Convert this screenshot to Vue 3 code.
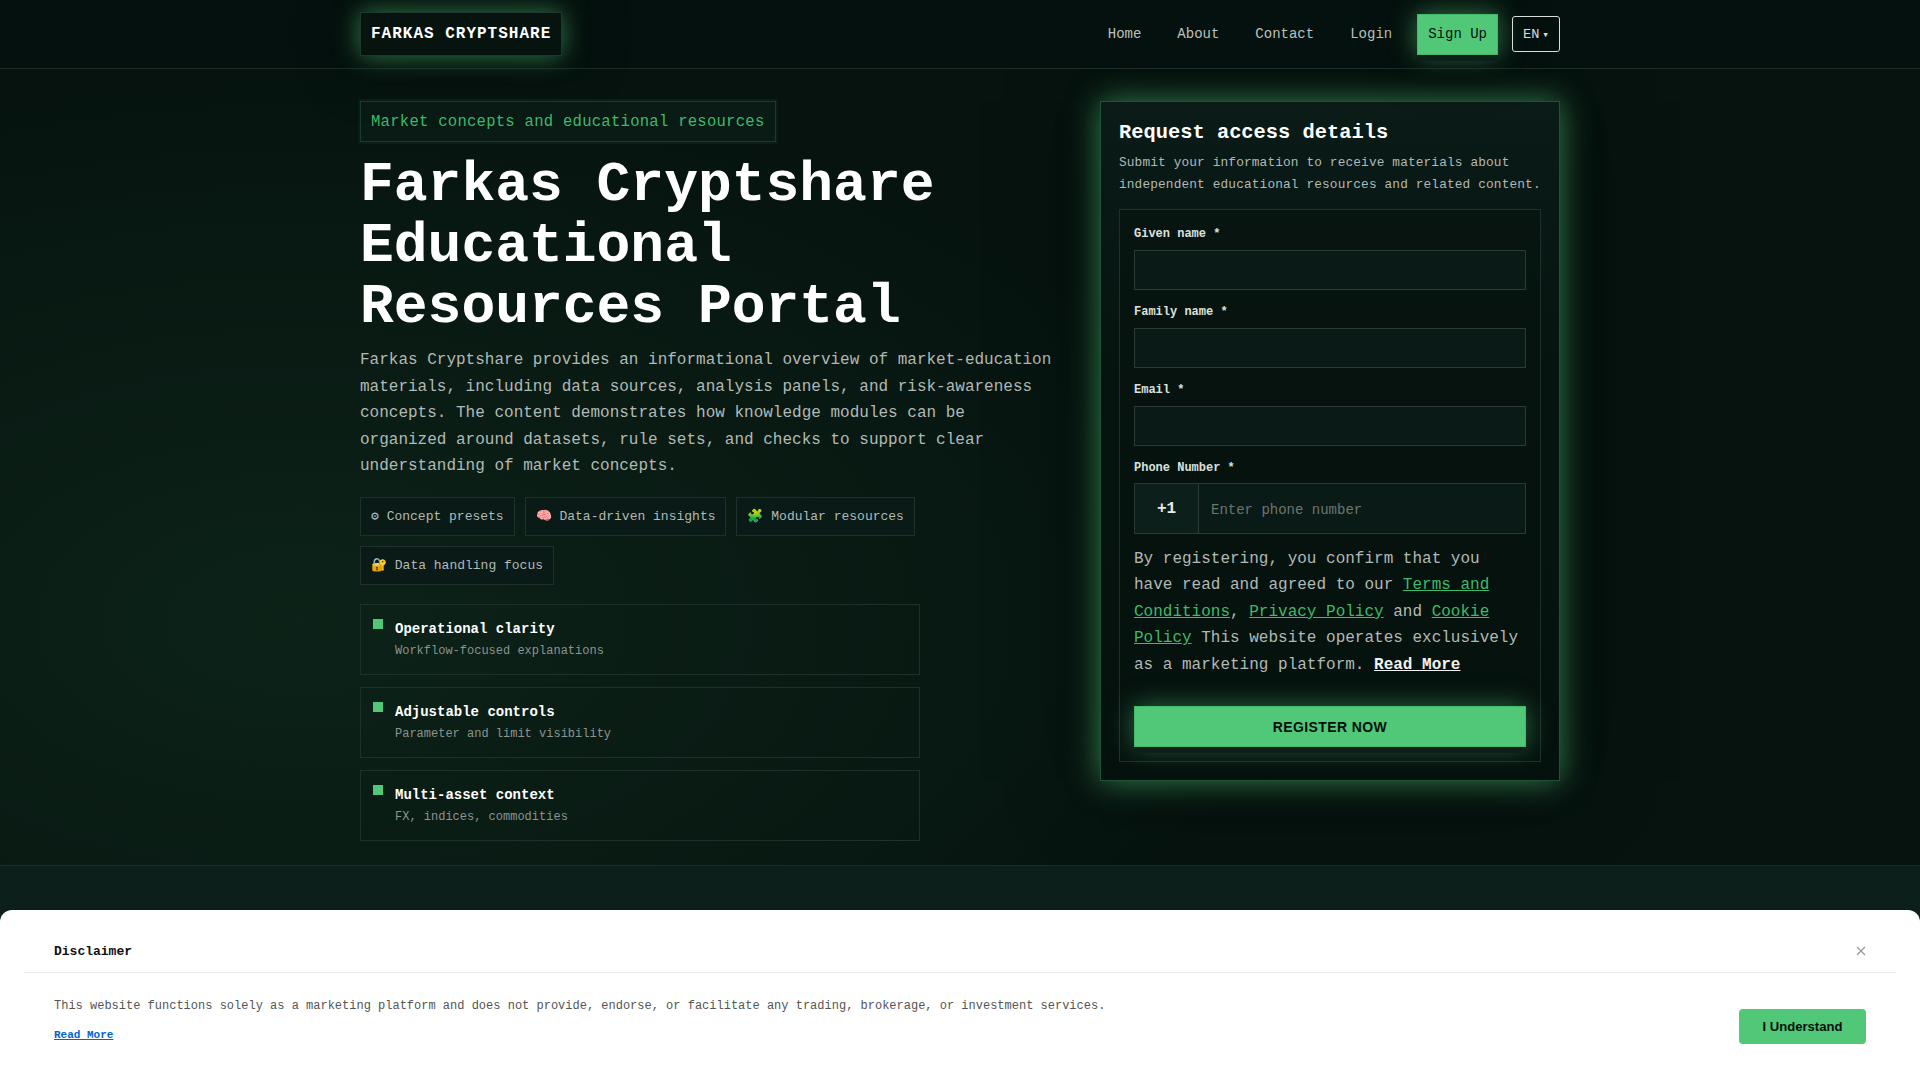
<script setup>
const navLinks = ['Home', 'About', 'Contact', 'Login']
const chips = [
  { icon: '⚙', label: 'Concept presets' },
  { icon: '🧠', label: 'Data-driven insights' },
  { icon: '🧩', label: 'Modular resources' },
  { icon: '🔐', label: 'Data handling focus' }
]
const features = [
  { title: 'Operational clarity', text: 'Workflow-focused explanations' },
  { title: 'Adjustable controls', text: 'Parameter and limit visibility' },
  { title: 'Multi-asset context', text: 'FX, indices, commodities' }
]
const fields = ['Given name *', 'Family name *', 'Email *']
</script>

<template>
  <div class="page">
    <header class="topbar">
      <div class="wrap topbar-row">
        <a class="logo">FARKAS CRYPTSHARE</a>
        <nav class="nav">
          <a v-for="l in navLinks" :key="l" class="nav-link">{{ l }}</a>
          <a class="signup">Sign Up</a>
          <button class="lang">EN<span class="caret">▾</span></button>
        </nav>
      </div>
    </header>

    <section class="hero">
      <div class="wrap hero-grid">
        <div class="left">
          <div class="tag">Market concepts and educational resources</div>
          <h1 class="title">Farkas Cryptshare Educational Resources Portal</h1>
          <p class="lead">Farkas Cryptshare provides an informational overview of market-education materials, including data sources, analysis panels, and risk-awareness concepts. The content demonstrates how knowledge modules can be organized around datasets, rule sets, and checks to support clear understanding of market concepts.</p>
          <div class="chips">
            <span v-for="c in chips" :key="c.label" class="chip">{{ c.icon }} {{ c.label }}</span>
          </div>
          <div class="cards">
            <div v-for="f in features" :key="f.title" class="card">
              <span class="bullet"></span>
              <div>
                <div class="card-title">{{ f.title }}</div>
                <div class="card-text">{{ f.text }}</div>
              </div>
            </div>
          </div>
        </div>

        <aside class="panel">
          <h2 class="panel-title">Request access details</h2>
          <p class="panel-sub">Submit your information to receive materials about independent educational resources and related content.</p>
          <form class="form" @submit.prevent>
            <div v-for="f in fields" :key="f" class="field">
              <label class="label">{{ f }}</label>
              <input class="input" type="text" />
            </div>
            <div class="field phone-field">
              <label class="label">Phone Number *</label>
              <div class="phone">
                <span class="prefix">+1</span>
                <input class="phone-input" type="tel" placeholder="Enter phone number" />
              </div>
            </div>
            <p class="consent">By registering, you confirm that you have read and agreed to our <a class="link">Terms and Conditions</a>, <a class="link">Privacy Policy</a> and <a class="link">Cookie Policy</a> This website operates exclusively as a marketing platform. <a class="more">Read More</a></p>
            <button class="register" type="submit">REGISTER NOW</button>
          </form>
        </aside>
      </div>
    </section>

    <div class="lower"></div>

    <div class="disclaimer">
      <div class="disc-head">
        <strong class="disc-title">Disclaimer</strong>
        <svg class="close" width="10" height="10" viewBox="0 0 10 10" aria-label="Close">
          <path d="M1 1 L9 9 M9 1 L1 9" stroke="#999" stroke-width="1.2" fill="none" />
        </svg>
      </div>
      <div class="disc-body">
        <div>
          <p class="disc-text">This website functions solely as a marketing platform and does not provide, endorse, or facilitate any trading, brokerage, or investment services.</p>
          <a class="disc-more">Read More</a>
        </div>
        <button class="understand">I Understand</button>
      </div>
    </div>
  </div>
</template>

<style>
html, body { margin: 0; background: #06120f; }
</style>

<style scoped>
* { box-sizing: border-box; }
.page {
  height: 1080px;
  overflow: hidden;
  display: flex;
  flex-direction: column;
  font-family: "Liberation Mono", monospace;
  color: #fff;
  background:
    radial-gradient(ellipse 1000px 560px at 300px 620px, rgba(80, 200, 120, 0.085), transparent 100%),
    #06130f;
}
.wrap { width: 1200px; margin: 0 auto; }
.topbar { height: 69px; border-bottom: 1px solid #1d2c28; background: #05110e; flex: none; position: relative; }
.topbar-row { display: flex; justify-content: space-between; padding-top: 12px; align-items: flex-start; }
.logo {
  height: 44px;
  display: flex;
  align-items: center;
  padding: 0 10px;
  font-size: 16px;
  font-weight: 700;
  letter-spacing: 1px;
  background: #06130f;
  border: 1px solid #1c3a2b;
  box-shadow: 0 0 26px rgba(80, 200, 120, 0.6), 0 0 60px rgba(0, 0, 0, 0.5);
}
.nav { display: flex; gap: 14px; align-items: center; font-size: 14px; margin-top: 2px; }
.nav-link { padding: 0 11px 2px; color: #bcc2bf; }
.signup {
  height: 41px;
  display: flex;
  align-items: center;
  padding: 0 10px 1px;
  background: #50c878;
  border: 1px solid #45b86c;
  color: #04100c;
  box-shadow: 0 6px 0 #0d1f1a, 0 0 26px rgba(80, 200, 120, 0.6), 0 0 50px rgba(0, 0, 0, 0.5);
}
.lang {
  width: 48px;
  height: 36px;
  margin-top: -1px;
  background: transparent;
  border: 1px solid #d8dcda;
  border-radius: 3px;
  color: #d8dcda;
  font: 13.6px "Liberation Mono", monospace;
  padding: 0;
}
.caret { font-size: 11px; margin-left: 3px; }

.hero { flex: none; height: 797px; padding-top: 32px; border-bottom: 1px solid #1d2c28; }
.hero-grid { display: grid; grid-template-columns: 700px 460px; gap: 40px; align-items: start; }
.left { display: flex; flex-direction: column; }
.tag {
  align-self: flex-start;
  height: 41px;
  display: flex;
  align-items: center;
  padding: 0 10px;
  font-size: 15.6px;
  letter-spacing: 0.24px;
  color: #3fb96b;
  background: #0a1a15;
  border: 1px solid #1a3a2a;
  box-shadow: 0 0 0 2px #0b1d17;
}
.title { margin: 13px 0 0; font-size: 56.32px; line-height: 60.8px; font-weight: 700; }
.lead { margin: 10px 0 0; font-size: 16px; line-height: 26.4px; color: #b2b9b6; }
.chips { display: flex; flex-wrap: wrap; gap: 10px; margin-top: 18px; max-width: 560px; }
.chip {
  display: block;
  height: 39px;
  line-height: 37px;
  white-space: pre;
  padding: 0 10px;
  font-size: 13px;
  color: #b2b9b6;
  background: #0a1a16;
  border: 1px solid #1f302b;
}
.cards { display: flex; flex-direction: column; gap: 12px; margin-top: 19px; max-width: 560px; }
.card {
  height: 71px;
  display: flex;
  gap: 12px;
  padding: 14px 12px;
  border: 1px solid #1f302b;
}
.bullet { width: 10px; height: 10px; background: #50c878; flex: none; }
.card-title { font-size: 14px; font-weight: 700; line-height: 18px; margin-top: 1px; }
.card-text { font-size: 12px; line-height: 16px; margin-top: 5px; color: #8a9490; }

.panel {
  height: 680px;
  padding: 19px 18px 18px;
  background: linear-gradient(180deg, #0a1b18, #06140f 40%, #05110d);
  border: 1px solid #1f5236;
  box-shadow: 0 0 30px rgba(80, 200, 120, 0.62), 0 0 80px rgba(0, 0, 0, 0.55);
}
.panel-title { margin: 0; font-size: 20.4px; line-height: 24px; font-weight: 700; }
.panel-sub { margin: 7px 0 0; font-size: 12.8px; letter-spacing: 0.13px; line-height: 22px; color: #b2b9b6; }
.form {
  margin-top: 13px;
  height: 553px;
  padding: 14px;
  border: 1px solid #1f302b;
  background: rgba(5, 17, 13, 0.5);
  display: flex;
  flex-direction: column;
}
.field { margin-bottom: 12px; display: flex; flex-direction: column; }
.label { font-size: 12px; line-height: 20px; font-weight: 700; color: #dce0de; margin-bottom: 6px; }
.input { height: 40px; background: #0a1a16; border: 1px solid #2a3a36; outline: none; }
.phone-field { margin-bottom: 0; }
.phone { height: 51px; display: flex; border: 1px solid #2a3a36; background: #0a1a16; margin-top: -1px; }
.prefix {
  width: 64px;
  display: flex;
  align-items: center;
  justify-content: center;
  font-size: 16px;
  font-weight: 700;
  color: #e8ecea;
  background: #0c1f1a;
  border-right: 1px solid #2a3a36;
}
.phone-input {
  flex: 1;
  min-width: 0;
  padding: 2px 12px 0;
  background: transparent;
  border: 0;
  outline: none;
  color: #fff;
  font: 14px "Liberation Mono", monospace;
}
.phone-input::placeholder { color: #6b7672; opacity: 1; }
.consent { margin: 12px 0 0; font-size: 16px; line-height: 26.4px; color: #b2b9b6; }
.link { color: #3fb96b; text-decoration: underline; }
.more { color: #f0f2f1; font-weight: 700; text-decoration: underline; }
.register {
  margin-top: 28px;
  height: 41px;
  flex: none;
  background: #50c878;
  border: 1px solid #45b86c;
  color: #04100c;
  font: 700 14px "Liberation Sans", sans-serif;
  letter-spacing: 0.4px;
  box-shadow: 0 6px 0 #0d1f1a, 0 0 26px rgba(80, 200, 120, 0.5);
}

.lower { flex: 1; background: #0c1f1a; }

.disclaimer {
  position: fixed;
  left: 0;
  right: 0;
  bottom: 0;
  height: 170px;
  background: #fff;
  border-radius: 12px 12px 0 0;
  padding: 0 24px;
  color: #111;
}
.disc-head {
  height: 63px;
  display: flex;
  align-items: center;
  justify-content: space-between;
  padding: 20px 30px 0;
  border-bottom: 1px solid #e8eaea;
}
.disc-title { font-size: 13px; }
.disc-body { display: flex; justify-content: space-between; padding: 25px 30px 0; }
.disc-text { margin: 0; font-size: 12px; line-height: 16px; color: #555; }
.disc-more { display: inline-block; margin-top: 15px; font-size: 11px; font-weight: 700; color: #0066cc; text-decoration: underline; }
.understand {
  width: 127px;
  height: 35px;
  margin-top: 11px;
  background: #50c878;
  border: 0;
  border-radius: 4px;
  color: #04100c;
  font: 700 13.1px "Liberation Sans", sans-serif;
}
</style>
